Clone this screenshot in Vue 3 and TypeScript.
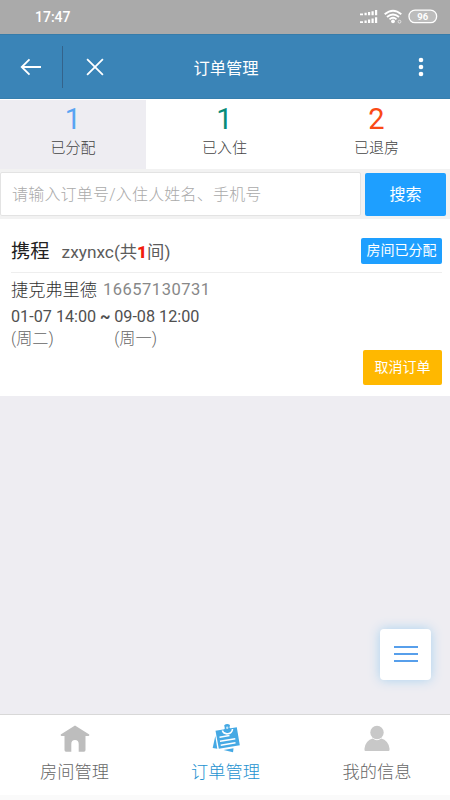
<script setup lang="ts">
import { ref } from 'vue'

interface OrderTab {
  label: string
  count: number
  tone: string
}

const tabs: OrderTab[] = [
  { label: '已分配', count: 1, tone: 'blue' },
  { label: '已入住', count: 1, tone: 'green' },
  { label: '已退房', count: 2, tone: 'red' },
]
const activeTab = ref(0)
const keyword = ref('')
</script>

<template>
  <div class="screen">
    <div class="status">
      <span class="time">17:47</span>
      <svg class="indicators" width="78" height="18" viewBox="0 0 78 18">
        <g fill="#fff">
          <path d="M0 5.500h3v1.700h-3zM4.500 4.700h2.200v2.500h-2.200zM8 4h2.200v3.200h-2.200zM11.500 3.200h2.200v4h-2.200zM15 2h2.200v5.200h-2.200z" />
          <path d="M0 13.300h3v1.700h-3zM4.500 12.500h2.200v2.500h-2.200zM8 11.500h2.200v3.500h-2.200zM11.500 10.500h2.200v4.500h-2.200zM15 9.300h2.200v5.700h-2.200z" />
          <circle cx="33" cy="13.300" r="1.900" />
        </g>
        <g fill="none" stroke="#fff" stroke-width="1.900">
          <path d="M24.700 6.300Q33 -.8 41.300 6.300M27 9Q33 3.800 39 9M29.500 11.400Q33 8.300 36.500 11.400" />
        </g>
        <circle cx="39.500" cy="13.700" r="1.400" fill="none" stroke="#e4e4e4" stroke-width="1" />
        <rect x="49" y="2.100" width="27.600" height="12.600" rx="6" fill="#bcbcbc" stroke="#fff" stroke-width="1.300" />
        <text x="62.800" y="12" text-anchor="middle" class="battery">96</text>
      </svg>
    </div>

    <header class="bar">
      <button class="back" aria-label="返回">
        <svg width="22" height="20" viewBox="0 0 22 20"><path d="M21 10H2M9.500 2.300L1.700 10L9.500 17.700" /></svg>
      </button>
      <button class="close" aria-label="关闭">
        <svg width="18" height="18" viewBox="0 0 18 18"><path d="M1.100 1.100L16.900 16.900M16.900 1.100L1.100 16.900" /></svg>
      </button>
      <h1>订单管理</h1>
      <button class="more" aria-label="更多">
        <svg width="6" height="20" viewBox="0 0 6 20"><circle cx="3" cy="3" r="2.300" /><circle cx="3" cy="10" r="2.300" /><circle cx="3" cy="17" r="2.300" /></svg>
      </button>
    </header>

    <nav class="tabs">
      <button
        v-for="(tab, i) in tabs"
        :key="tab.label"
        :class="['tab', tab.tone, { active: activeTab === i }]"
        @click="activeTab = i"
      >
        <span class="count">{{ tab.count }}</span>
        <span class="label">{{ tab.label }}</span>
      </button>
    </nav>

    <form class="search" @submit.prevent>
      <input v-model="keyword" placeholder="请输入订单号/入住人姓名、手机号" />
      <button type="submit">搜索</button>
    </form>

    <section class="order">
      <div class="order-head">
        <span class="source">携程</span>
        <span class="room">zxynxc(共<b>1</b>间)</span>
        <span class="badge">房间已分配</span>
      </div>
      <div class="guest"><span class="name">捷克弗里德</span><span class="phone">16657130731</span></div>
      <div class="stay">
        <div class="date"><span>01-07 14:00</span><small>(周二)</small></div>
        <b class="to">~</b>
        <div class="date"><span>09-08 12:00</span><small>(周一)</small></div>
      </div>
      <button class="cancel">取消订单</button>
    </section>

    <main class="space">
      <button class="fab" aria-label="菜单">
        <svg width="24" height="19" viewBox="0 0 24 19"><path d="M0 2h24M0 9h24M0 16h24" /></svg>
      </button>
    </main>

    <footer class="bottom">
      <div class="item">
        <svg width="30" height="30" viewBox="0 0 30 30">
          <path fill="#bdbdbd" d="M15 1.500L29.300 10.500Q29.500 12 28.300 12H25.500V26Q25.500 27.800 24 27.800H18.700V20Q18.700 16 15 16T11.300 20V27.800H6Q4.500 27.800 4.500 26V12H1.700Q.5 12 .7 10.500Z" />
        </svg>
        <span>房间管理</span>
      </div>
      <div class="item selected">
        <svg width="30" height="30" viewBox="0 0 30 30">
          <g fill="#45a9e4">
            <path d="M4.300 12L6.300 24.800L1.700 24Z" />
            <path d="M4.500 6.700L25.800 3.200L28.800 21.300L7.800 24.800Z" />
            <path d="M12.500 26L22.500 24.300L22 28.300Z" />
          </g>
          <path d="M8.500 13.200L18.500 11.500M9 17.200L24.300 14.700M9.700 21.200L24.500 18.700" stroke="#fff" stroke-width="1.500" />
          <path d="M11.300 6.500A5.300 5.300 0 0 0 21.500 5" fill="none" stroke="#fff" stroke-width="1.600" />
          <path d="M13.200 1.200Q16 -1 19 1L18.500 3.500L20.300 6.200Q16.500 9.500 12.700 7.300L13.800 4.300Z" fill="#45a9e4" />
          <circle cx="16.200" cy="3.700" r="1.200" fill="#c4e5f8" />
        </svg>
        <span>订单管理</span>
      </div>
      <div class="item">
        <svg width="30" height="30" viewBox="0 0 30 30">
          <g fill="#c8c8c8"><circle cx="15" cy="8.500" r="6.700" /><path d="M2.500 26V24.500Q3.700 16.500 10.800 14.600Q15 17.800 19.200 14.600Q26.300 16.500 27.500 24.500V26Q27.500 27 26.500 27H3.500Q2.500 27 2.500 26Z" /></g>
        </svg>
        <span>我的信息</span>
      </div>
    </footer>
  </div>
</template>

<style>
body {
  margin: 0;
}
</style>

<style scoped>
.screen {
  width: 450px;
  height: 800px;
  display: flex;
  flex-direction: column;
  overflow: hidden;
  background: #eeedf2;
  font-family: Roboto, 'Noto Sans CJK SC', sans-serif;
  font-weight: 300;
  color: #555;
}
button,
input {
  font: inherit;
  box-sizing: border-box;
  border: 0;
  padding: 0;
  margin: 0;
}
.status {
  height: 34px;
  flex: none;
  background: #aaa;
  display: flex;
  align-items: center;
  justify-content: space-between;
  padding: 0 12px 0 35px;
  color: #fff;
}
.time {
  font: 500 14px/34px Roboto, sans-serif;
}
.battery {
  font: 700 9.5px Roboto, sans-serif;
  fill: #fff;
}
.bar {
  height: 65px;
  flex: none;
  box-sizing: border-box;
  border-top: 1px solid #367caa;
  border-bottom: 1px solid #367fae;
  background: #3a84b7;
  display: grid;
  grid-template-columns: 63px 63px 200px 96px 28px;
  align-items: center;
}
.bar button {
  display: flex;
  align-items: center;
  background: none;
  height: 42px;
}
.bar svg {
  fill: none;
  stroke: #fff;
  stroke-width: 1.8;
}
.bar .back {
  border-right: 1px solid #34638b;
  padding-left: 20px;
}
.bar .close {
  justify-content: center;
}
.bar h1 {
  margin: 0;
  text-align: center;
  font-size: 16.3px;
  font-weight: 400;
  color: #fff;
}
.bar .more {
  grid-column: 5;
  margin-left: -4px;
}
.bar .more svg {
  fill: #fff;
  stroke: none;
}
.tabs {
  height: 70px;
  flex: none;
  display: grid;
  grid-template-columns: 146px 157px 147px;
}
.tab {
  display: flex;
  flex-direction: column;
  align-items: center;
  background: #fff;
  border-top: 1px solid #fff;
}
.tab.active {
  background: #eeedf2;
}
.count {
  font-size: 29px;
  line-height: 39px;
  font-weight: 400;
}
.blue .count {
  color: #58a4f3;
}
.green .count {
  color: #078c78;
}
.red .count {
  color: #fa4a16;
}
.label {
  font-size: 15px;
  line-height: 19px;
  color: #444;
}
.search {
  height: 50px;
  flex: none;
  box-sizing: border-box;
  padding: 3px 4px 3px 0;
  background: #f2f2f2;
  display: flex;
  gap: 4px;
}
.search input {
  width: 361px;
  height: 44px;
  border: 1px solid #e3e3e3;
  border-radius: 2px;
  background: #fff;
  padding: 0 11px;
  font-size: 16px;
  letter-spacing: 0.2px;
  outline: none;
}
.search input::placeholder {
  color: #aaa;
  opacity: 1;
}
.search button {
  flex: 1;
  margin-top: 1px;
  padding-bottom: 3px;
  border-radius: 2px;
  background: #1e9fff;
  color: #fff;
  font-size: 16px;
  font-weight: 400;
}
.order {
  height: 177px;
  flex: none;
  box-sizing: border-box;
  padding: 12px 8px 11px 11px;
  background: #fff;
  display: flex;
  flex-direction: column;
}
.order-head {
  height: 42px;
  box-sizing: border-box;
  border-bottom: 1px solid #eee;
  display: flex;
  align-items: center;
  padding-bottom: 2px;
}
.source {
  font-size: 19.3px;
  font-weight: 400;
  color: #222;
  margin-top: -2px;
}
.room {
  margin-left: 12px;
  font-size: 17.3px;
  font-weight: 400;
  color: #5c5c5c;
}
.room b {
  color: #f21b0c;
  font-weight: 900;
}
.badge {
  width: 81px;
  height: 26px;
  margin-left: auto;
  border-radius: 2px;
  background: #1e9fff;
  color: #fff;
  font-size: 14px;
  font-weight: 400;
  line-height: 25px;
  text-align: center;
}
.guest {
  display: flex;
  align-items: center;
  height: 24px;
  margin-top: 4px;
  font-size: 17.2px;
}
.name {
  color: #333;
  width: 92px;
  margin-top: -2px;
}
.phone {
  color: #888;
  font-size: 16.5px;
  font-weight: 400;
  letter-spacing: 0.5px;
}
.stay {
  display: flex;
  font-size: 16.2px;
  font-weight: 400;
  line-height: 22px;
  margin-top: 5px;
  color: #505050;
}
.date {
  display: flex;
  flex-direction: column;
}
.date small {
  font-size: 16.2px;
  font-weight: 300;
  color: #666;
}
.to {
  width: 18px;
  text-align: center;
}
.cancel {
  width: 79px;
  height: 35px;
  align-self: flex-end;
  margin-top: auto;
  padding-bottom: 3px;
  border-radius: 2px;
  background: #ffb800;
  color: #fff;
  font-size: 14px;
  font-weight: 400;
}
.space {
  flex: 1;
  display: flex;
  align-items: flex-end;
  justify-content: flex-end;
  padding: 0 19px 34px;
}
.fab {
  width: 51px;
  height: 51px;
  display: grid;
  place-items: center;
  border-radius: 4px;
  background: #fff;
  box-shadow: 0 0 12px #a9d2ef;
}
.fab path {
  stroke: #579feb;
  stroke-width: 2;
}
.bottom {
  height: 86px;
  flex: none;
  box-sizing: border-box;
  border-top: 1px solid #d8d8d8;
  border-bottom: 5px solid #fafafa;
  background: #fff;
  display: grid;
  grid-template-columns: 149px 153px 148px;
}
.item {
  display: flex;
  flex-direction: column;
  align-items: center;
  padding-top: 9px;
  font-size: 17.2px;
  line-height: 22px;
  color: #666;
}
.item:last-child {
  padding-left: 2px;
}
.item span {
  margin-top: 7px;
}
.item.selected {
  color: #2592d0;
}
</style>
